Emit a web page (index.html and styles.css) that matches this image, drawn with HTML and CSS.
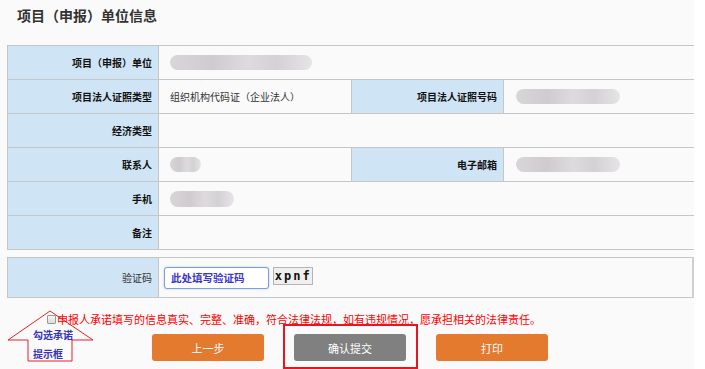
FILE: index.html
```html
<!DOCTYPE html>
<html lang="zh-CN">
<head>
<meta charset="utf-8">
<title>项目（申报）单位信息</title>
<link rel="stylesheet" href="styles.css">
</head>
<body>
<div class="page">
  <div class="header"><h1 class="title">项目（申报）单位信息</h1></div>

  <table class="info">
    <colgroup><col class="c1"><col class="c2"><col class="c3"><col class="c4"></colgroup>
    <tr>
      <td class="lbl">项目（申报）单位</td>
      <td class="val" colspan="3"><span class="blob b1"></span></td>
    </tr>
    <tr>
      <td class="lbl">项目法人证照类型</td>
      <td class="val">组织机构代码证（企业法人）</td>
      <td class="lbl">项目法人证照号码</td>
      <td class="val"><span class="blob b2"></span></td>
    </tr>
    <tr>
      <td class="lbl">经济类型</td>
      <td class="val" colspan="3"></td>
    </tr>
    <tr>
      <td class="lbl">联系人</td>
      <td class="val"><span class="blob b3"></span></td>
      <td class="lbl">电子邮箱</td>
      <td class="val"><span class="blob b4"></span></td>
    </tr>
    <tr>
      <td class="lbl">手机</td>
      <td class="val" colspan="3"><span class="blob b5"></span></td>
    </tr>
    <tr>
      <td class="lbl">备注</td>
      <td class="val" colspan="3"></td>
    </tr>
  </table>

  <table class="info verify">
    <colgroup><col class="c1"><col></colgroup>
    <tr>
      <td class="lbl normal">验证码</td>
      <td class="val vcell">
        <input class="code" type="text" value="此处填写验证码">
        <span class="captcha">xpnf</span>
      </td>
    </tr>
  </table>

  <div class="promise">
    <label class="promise-line"><input type="checkbox" class="chk"><span class="promise-text">申报人承诺填写的信息真实、完整、准确，符合法律法规，如有违规情况，愿承担相关的法律责任。</span></label>
    <div class="note">
      <svg class="arrow" width="100" height="56" viewBox="0 0 100 56">
        <polygon points="50,1 93,30 72,30 72,51 28,51 28,30 8,30" fill="none" stroke="#e8202a" stroke-width="1"/>
      </svg>
      <span class="note-t1">勾选承诺</span>
      <span class="note-t2">提示框</span>
    </div>
  </div>

  <div class="actions">
    <button class="btn orange">上一步</button>
    <span class="mark"><button class="btn grey">确认提交</button></span>
    <button class="btn orange">打印</button>
  </div>
</div>
</body>
</html>
```

FILE: styles.css
```css
html, body {
  margin: 0;
  padding: 0;
  background: #ffffff;
}
body {
  font-family: "Microsoft YaHei", "Noto Sans CJK SC", "Noto Sans", sans-serif;
  color: #222;
}
.page {
  width: 694px;
  height: 369px;
  background: #fafafa;
  position: relative;
  overflow: hidden;
}
.header {
  height: 45px;
  box-sizing: border-box;
  padding: 6px 0 0 17px;
}
.title {
  margin: 0;
  font-size: 14px;
  line-height: 18px;
  font-weight: bold;
  color: #333;
}
.info {
  margin-left: 7px;
  width: 687px;
  border-collapse: collapse;
  table-layout: fixed;
  border: 1px solid #c6c6c6;
  border-right: 2px solid #d0d0d0;
}
.c1 { width: 151px; }
.c2 { width: 193px; }
.c3 { width: 152px; }
.c4 { width: 191px; }
.info td {
  height: 33px;
  padding: 0;
  border: 1px solid #c6c6c6;
  font-size: 10px;
  line-height: 14px;
  vertical-align: middle;
}
.lbl {
  background: #cfe4f4;
  text-align: right;
  padding-right: 6px !important;
  font-weight: bold;
  color: #111;
}
.lbl.normal {
  font-weight: normal;
  color: #333;
}
.val {
  background: #fafafa;
  padding-left: 11px !important;
  color: #333;
}
.blob {
  display: block;
  height: 15px;
  border-radius: 8px;
  background: linear-gradient(90deg, #d9d6d9 0%, #cfcbcf 30%, #dedbde 55%, #d4d1d4 75%, #e6e4e6 100%);
  filter: blur(0.6px);
}
.b1 { width: 142px; }
.b2 { width: 104px; margin-left: 1px; }
.b3 { width: 31px; }
.b4 { width: 104px; margin-left: 1px; }
.b5 { width: 64px; height: 16px; }

.verify {
  margin-top: 7px;
}
.verify td {
  height: 39px;
}
.vcell {
  padding-left: 5px !important;
}
.code {
  box-sizing: border-box;
  width: 105px;
  height: 22px;
  border: 1px solid #7d9fd6;
  border-radius: 3px;
  box-shadow: 0 0 2px #a9c2ea;
  padding: 0 0 0 6px;
  font-family: inherit;
  font-size: 10.5px;
  font-weight: bold;
  color: #3b37c8;
  background: #fff;
  vertical-align: middle;
  outline: none;
}
.captcha {
  display: inline-block;
  vertical-align: middle;
  margin-left: 2px;
  margin-top: -4px;
  width: 38px;
  height: 16px;
  line-height: 16px;
  background: #efefef;
  border: 1px solid #b5b5b5;
  font-family: "DejaVu Sans Mono", "Liberation Mono", monospace;
  font-size: 12px;
  font-weight: bold;
  letter-spacing: 2px;
  text-align: center;
  color: #111;
}

.promise {
  position: relative;
  height: 36px;
}
.promise-line {
  display: flex;
  align-items: center;
  padding: 14px 0 0 47px;
  height: 14px;
}
.chk {
  appearance: none;
  -webkit-appearance: none;
  margin: 0;
  width: 9px;
  height: 9px;
  box-sizing: border-box;
  border: 1px solid #9a9a9a;
  border-radius: 1px;
  background: linear-gradient(#f4f4f4, #dcdcdc);
}
.promise-text {
  margin-left: 1px;
  font-size: 11px;
  line-height: 14px;
  color: #ff0000;
  white-space: nowrap;
}
.note {
  position: absolute;
  left: 0;
  top: 12px;
  width: 100px;
  height: 56px;
}
.arrow {
  position: absolute;
  left: 0;
  top: 0;
}
.note-t1, .note-t2 {
  position: absolute;
  left: 33px;
  font-size: 10px;
  line-height: 12px;
  font-weight: bold;
  color: #3535b8;
  white-space: nowrap;
}
.note-t1 { top: 19px; }
.note-t2 { top: 38px; }

.actions {
  display: flex;
  align-items: center;
  gap: 30px;
  padding-left: 152px;
}
.btn {
  width: 112px;
  height: 27px;
  border: none;
  border-radius: 3px;
  font-family: inherit;
  font-size: 11px;
  color: #fff;
  padding: 0;
}
.orange { background: #e47a2e; }
.grey { background: #808080; }
.mark {
  position: relative;
  display: inline-block;
  height: 27px;
}
.mark::after {
  content: "";
  position: absolute;
  left: -11px;
  right: -12px;
  top: -10px;
  bottom: -8px;
  border: 2px solid #e8141e;
}
.mark .btn { display: block; }
```
